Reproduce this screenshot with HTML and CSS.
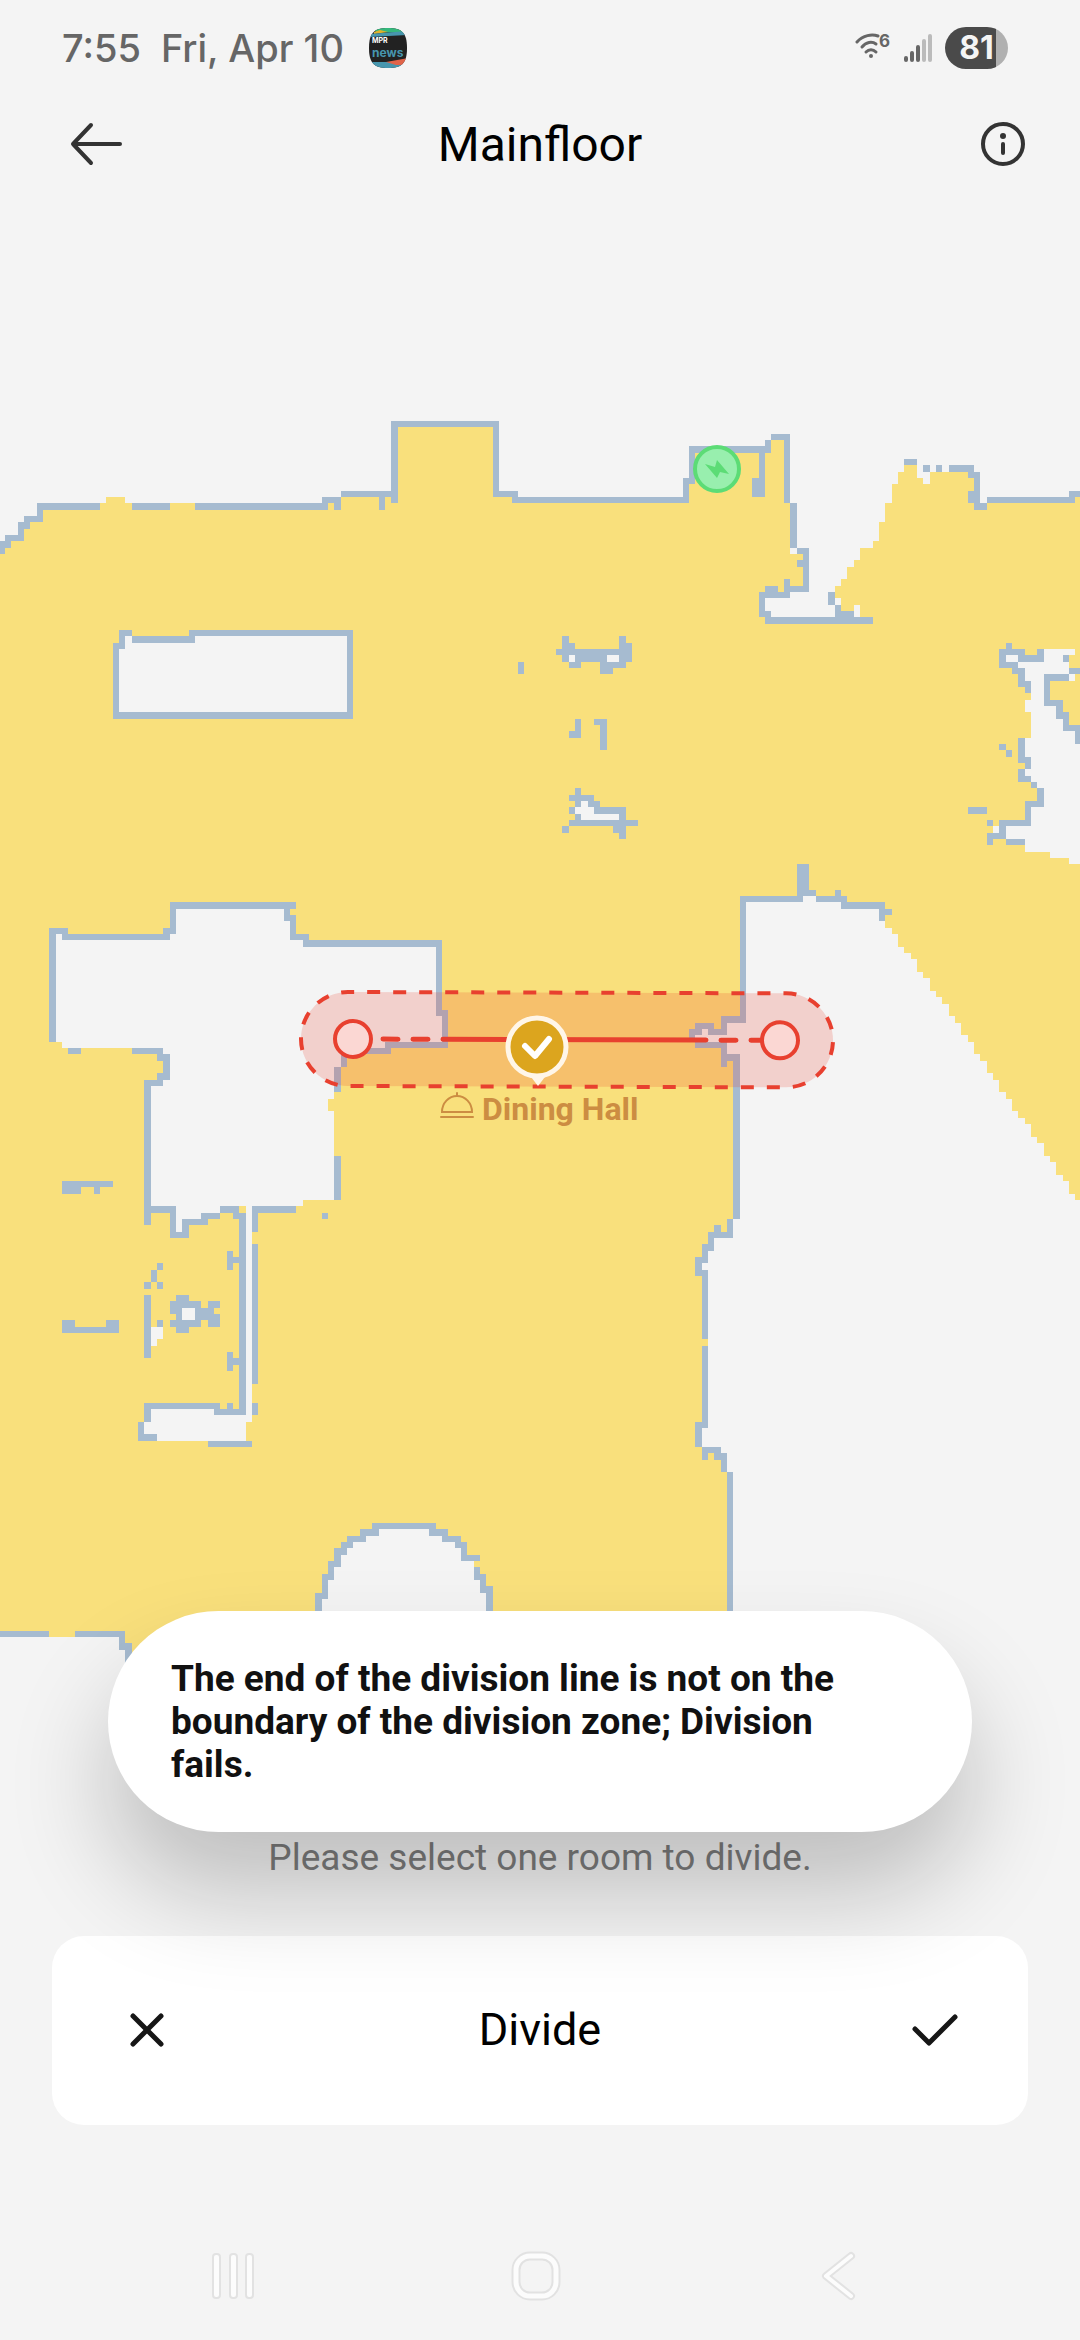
FILE: index.html
```html
<!DOCTYPE html>
<html lang="en">
<head>
    <meta charset="UTF-8">
    <meta name="viewport" content="width=device-width, initial-scale=1.0">
    <title>Mainfloor</title>
    <link rel="stylesheet" href="styles.css">
</head>
<body>
    <div class="status-bar">
        <span class="status-time">7:55</span>
        <span class="status-date">Fri, Apr 10</span>
        <svg class="status-app" width="40" height="40" viewBox="0 0 40 40" role="img" aria-label="MPR news">
            <defs>
                <clipPath id="appShape"><path d="M20 0C34 0 39 5 39 20S34 40 20 40 1 35 1 20 6 0 20 0z"/></clipPath>
            </defs>
            <g clip-path="url(#appShape)">
                <rect width="40" height="40" fill="#222"/>
                <path d="M5 0H40V5L8 4z" fill="#35b77c"/>
                <path d="M6 4L12 2L20 4L6 6z" fill="#e0b32c"/>
                <path d="M2 6L40 3V7L2 9z" fill="#4796ae"/>
                <path d="M2 34L20 34L40 37V40H2z" fill="#4796ae"/>
                <path d="M18 34L40 30V37H28z" fill="#e0644a"/>
            </g>
            <text x="4" y="15" class="app-name">MPR</text>
            <text x="4" y="29" class="app-news">news</text>
        </svg>
        <div class="status-icons">
            <svg width="36" height="36" viewBox="0 -3 36 36" fill="none" stroke="#666" stroke-width="3" stroke-linecap="round">
                <path d="M2 9C8 2 17 1 23 3"/>
                <path d="M7 14C11 9 17 8 21 11"/>
                <path d="M11 19C14 16 18 16 21 19"/>
                <circle cx="16" cy="23" r="2" fill="#666" stroke="none"/>
                <text x="24" y="14" class="wifi-six">6</text>
            </svg>
            <svg width="30" height="30" viewBox="0 0 30 30" stroke-width="4" stroke-linecap="round">
                <path d="M3 25V27M9 20V27M15 14V27" stroke="#666"/>
                <path d="M21 8V27M27 3V27" stroke="#bbb"/>
            </svg>
            <span class="battery">81</span>
        </div>
    </div>

    <header class="top-bar">
        <button type="button" class="icon-button" aria-label="Back">
            <svg width="52" height="44" viewBox="0 0 52 44" fill="none" stroke="#333" stroke-width="4" stroke-linecap="round" stroke-linejoin="round">
                <path d="M50 22H3M21 3L3 22L21 41"/>
            </svg>
        </button>
        <h1 class="title">Mainfloor</h1>
        <button type="button" class="icon-button" aria-label="Information">
            <svg width="46" height="46" viewBox="0 0 46 46" fill="none" stroke="#333" stroke-width="4" stroke-linecap="round">
                <circle cx="23" cy="23" r="20"/>
                <path d="M23 23V32"/>
                <circle cx="23" cy="15" r="3" fill="#333" stroke="none"/>
            </svg>
        </button>
    </header>

    <main class="stage">
        <svg class="map" viewBox="0 192 1080 1640" role="img" aria-label="Floor map">
            <!-- one unit = one map cell -->
            <g transform="translate(-1.333 421) scale(6.3333)" shape-rendering="crispEdges">
                <path class="floor" d="M0 20V19H1V18H3V16H4V15H6V13H17V12H20V13H51V12H54V11H62V0H79V11H82V12H108V9H109V4H121V3H122V2H125V13H126V20H125V21H127V27H125V28H121V31H136V29H135V30H133V28H132V26H133V25H134V23H135V22H136V20H138V19H139V16H140V13H141V10H142V8H143V6H145V9H146V10H147V8H154V13H156V12H169V11H172V197H21V194H20V192H0z"/>
                <!-- right side -->
                <path class="void" d="M165 36H170V37H169V40H170V41H169V40H165V45H167V47H168V49H170V51H172V70H169V69H166V68H162V66H159V63H163V61H165V58H164V57H163V56H162V55H163V53H162V50H163V46H162V44H163V41H162V39H161V38H165zM159 37h2v1h-2zM157 64h1v1h-1z"/>
                <path class="void" d="M118 76H127V75H129V76H133V77H139V79H140V80H141V81H142V83H143V84H144V85H145V87H146V88H147V90H148V91H149V92H150V94H151V95H152V97H153V98H154V100H155V101H156V103H157V104H158V106H159V107H160V109H161V110H162V111H163V113H164V114H165V116H166V117H167V119H168V120H169V122H170V123H172V198H116V166H115V163H114V162H111V159H112V134H111V133H112V131H113V129H116V126H117V101H115V98H110V97H115V94H118zM111 96h1v1h-1z"/>
                <!-- left side -->
                <path class="void" d="M9 81H10V82H27V81H28V77H45V79H46V82H48V83H69V94H70V98H61V99H55V100H54V102H53V107H52V109H53V123H48V124H40V158H39V161H23V158H24V156H34V157H39V124H35V125H32V126H29V128H28V124H24V105H26V104H27V100H26V99H10V98H9z"/>
                <path class="void" d="M20 34H21V35H31V34H55V46H19V36H20zM24 143h2v2h-1v1h-1zM29 140h2v2h-2z"/>
                <path class="void" d="M51 190V186H52V183H53V181H54V179H55V178H56V177H58V176H60V175H68V176H70V177H72V178H73V180H75V183H76V185H77V190z"/>
                <!-- furniture -->
                <path class="void" d="M90 37h1v1h-1zM96 37h2v1h-2zM92 60h1v1h1v1h4v1h-6v-1h-1v-1h1z"/>
                <g class="wall" transform="translate(.5 .5)">
                    <path d="M0 20V19H1V18H3V16H4V15H6V13H15M21 13H26M31 13H51V12H53V13M54 11H62M60 11V13M62 12V0H78V11H81V12H108V9H109V4H121V3M122 2H124V12M120 4V11M119 9V11M125 13V19"/>
                    <path d="M126 20H127V26H124M126 22h0M124 25V27H120V30H121V31H137M121 26H122M131 27V28M132 29V30H134"/>
                    <path d="M143 6H144M146 7h0M148 7h0M150 7H153V8H154V13H155M153 11V12M156 12H169V11H171"/>
                    <path d="M20 33H19V35H18V46H55V33H30V34H21M82 38V39"/>
                    <path d="M159 35V36M164 36V37H161V36H158V38H160V39H161V41H162V42M168 37h0M169 39H171M168 40H165V44H167V46H168V48H170V50"/>
                    <path d="M158 51h0M159 52h0M161 50V53H162V54M161 55V56H162M163 57h0M164 58V60H162V63H158V65H156V66M156 63h0M159 66H161M153 61H155"/>
                    <path d="M89 34V37M90 35h0M88 36H99M91 37H95V39H96V38H98M90 38H91M98 34V37M99 35V37M91 47V49H90M94 47H95V51"/>
                    <path d="M91 58V60M90 59H93V60H94V61H98V65M90 61h0M91 62V63M90 63H100M89 64h0M97 64h0"/>
                    <path d="M126 70V75H117V94H114V96H112V95H110V96H109V97M127 70V74H128M129 75H133V76H139V78M132 74h0M140 77h0M110 98H114V101M114 100H116V125"/>
                    <path d="M115 126V128H112V130H111V132H110V134H111V144M113 127V128M111 146V158H110V161M111 163V162H113V163H114V165M115 166V192"/>
                    <path d="M53 102V105M54 101V100M55 99H61V98H70V93H69V82H48V81H46V78H45V76H27V80H26V81H10V80H8V97M46 76h0"/>
                    <path d="M11 99H12M21 99H25V100H26V103H25V104H23V126M53 116V122M10 120H17M10 121H12M15 121h0"/>
                    <path d="M24 124H27V128H29V126H32V125H34M35 124H37V125H38V156H34V155H23V157M36 155h0M22 158V160H24M33 161H39M46 124H40V127M40 130V151M40 155V156M51 125h0"/>
                    <path d="M36 131V133M37 132h0M36 147V149M37 148h0M25 133h0M24 134V135M23 136h0M25 136h0M23 138V147M25 142h0"/>
                    <path d="M28 138H29M27 139H31M33 139H34M27 140H28M31 140H33M28 141h0M31 141H34M27 142H31M33 142H34M28 143H29M10 142V143H18V142M11 142h0M17 142h0"/>
                    <path d="M50 188V185H51V182H52V180H53V178H54V177H55V176H57V175H59V174H68V175H70V176H72V177H73V179H75M75 181V182H76V184H77V188M0 191H7M12 191H19V193H20V196"/>
                </g>
            </g>

            <!-- charging dock -->
            <circle cx="717" cy="469" r="22" fill="#98efae" stroke="#5cdc76" stroke-width="4"/>
            <path d="M705 464L715 467L717 460L729 474L720 472L717 478z" fill="#5cdc76"/>

            <!-- division line -->
            <g transform="rotate(.18 353 1039)" stroke="#e8402f">
                <rect x="301" y="992" width="532" height="94" rx="47" fill="#ea402c" fill-opacity=".2" stroke="none"/>
                <rect x="301" y="992" width="532" height="94" rx="47" fill="none" stroke-width="4" pathLength="1170" stroke-dasharray="13 13" stroke-dashoffset="7"/>
                <path d="M383 1039H398M413 1039H428M443 1039H706M721 1039H736M751 1039H762" stroke-width="5" stroke-linecap="round"/>
                <circle cx="353" cy="1039" r="18" fill="#fbd7d3" stroke-width="4"/>
                <circle cx="780" cy="1039" r="18" fill="#fbd7d3" stroke-width="4"/>
            </g>

            <!-- selected room -->
            <path d="M528 1073L538 1086L548 1073z" fill="#fff6e8"/>
            <circle cx="537" cy="1047" r="29" fill="#dca51e" stroke="#fff6e8" stroke-width="5"/>
            <path d="M525 1046L535 1056L549 1039" fill="none" stroke="#fff" stroke-width="6" stroke-linecap="round" stroke-linejoin="round"/>
            <g fill="none" stroke="#cc8d42" stroke-width="2" stroke-linecap="round">
                <path d="M442 1112A15 16 0 0 1 472 1112z"/>
                <path d="M457 1093V1096M441 1117H473"/>
            </g>
            <text class="room-name" x="482" y="1120">Dining Hall</text>
        </svg>

        <div class="toast" role="alert">The end of the division line is not on the boundary of the division zone; Division fails.</div>
    </main>

    <p class="hint">Please select one room to divide.</p>

    <section class="action-card">
        <button type="button" class="icon-button" aria-label="Cancel">
            <svg width="36" height="36" viewBox="0 0 36 36" fill="none" stroke="#161616" stroke-width="5" stroke-linecap="round">
                <path d="M4 4L32 32M32 4L4 32"/>
            </svg>
        </button>
        <h2 class="action-title">Divide</h2>
        <button type="button" class="icon-button" aria-label="Confirm">
            <svg width="46" height="36" viewBox="0 0 46 36" fill="none" stroke="#161616" stroke-width="5" stroke-linecap="round" stroke-linejoin="round">
                <path d="M3 17L17 31L43 5"/>
            </svg>
        </button>
    </section>

    <nav class="nav-bar">
        <button type="button" class="icon-button" aria-label="Recent apps">
            <svg width="50" height="52" viewBox="0 0 50 52" fill="#fcfcfc" stroke="#e2e2e2" stroke-width="2">
                <rect x="5" y="4" width="7" height="44" rx="3"/>
                <rect x="22" y="4" width="7" height="44" rx="3"/>
                <rect x="38" y="4" width="7" height="44" rx="3"/>
            </svg>
        </button>
        <button type="button" class="icon-button" aria-label="Home">
            <svg width="50" height="52" viewBox="0 0 50 52" fill="none">
                <rect x="5" y="6" width="40" height="40" rx="14" stroke="#e2e2e2" stroke-width="9"/>
                <rect x="5" y="6" width="40" height="40" rx="14" stroke="#fcfcfc" stroke-width="5"/>
            </svg>
        </button>
        <button type="button" class="icon-button" aria-label="Go back">
            <svg width="50" height="52" viewBox="0 0 50 52" fill="none" stroke-linecap="round" stroke-linejoin="round">
                <path d="M37 6L12 26L37 46" stroke="#e2e2e2" stroke-width="8"/>
                <path d="M37 6L12 26L37 46" stroke="#fcfcfc" stroke-width="4"/>
            </svg>
        </button>
    </nav>
</body>
</html>
```
FILE: styles.css
```css
* {
    margin: 0;
    padding: 0;
    box-sizing: border-box;
}

body {
    min-height: 100vh;
    display: flex;
    flex-direction: column;
    background-color: #f4f4f4;
    color: #000;
    font-family: Roboto, sans-serif;
}

svg {
    display: block;
}

.icon-button {
    display: flex;
    background: none;
    border: none;
    cursor: pointer;
}

.status-bar {
    display: flex;
    align-items: center;
    height: 96px;
    padding: 0 72px 0 62px;
    color: #666;
    font-family: Inter, sans-serif;
    font-size: 38px;
    font-weight: 500;
}

.status-date {
    margin-left: 20px;
}

.status-app {
    margin-left: 24px;
}

.app-name {
    fill: #fff;
    font-size: 7px;
    font-weight: 700;
}

.app-news {
    fill: #4796ae;
    font-size: 12px;
    font-weight: 700;
}

.status-icons {
    display: flex;
    align-items: center;
    gap: 12px;
    margin-left: auto;
}

.wifi-six {
    fill: #666;
    stroke: none;
    font-size: 17px;
    font-weight: 700;
}

.battery {
    width: 63px;
    height: 42px;
    border-radius: 21px;
    background: linear-gradient(to right, #4a4a4a 81%, #b0b0b0 81%);
    color: #f4f4f4;
    font-size: 32px;
    font-weight: 700;
    line-height: 42px;
    text-align: center;
}

.top-bar,
.action-card {
    display: grid;
    grid-template-columns: 1fr auto 1fr;
    align-items: center;
}

.top-bar .icon-button:last-child,
.action-card .icon-button:last-child {
    justify-self: end;
}

.top-bar {
    height: 96px;
    padding: 0 54px;
}

.top-bar .icon-button:first-child {
    padding-left: 16px;
}

.title {
    font-size: 48px;
    font-weight: 400;
}

.stage {
    position: relative;
    z-index: 1;
}

.map {
    width: 100%;
    height: auto;
}

.floor {
    fill: #f9e07c;
}

.void {
    fill: #f4f4f4;
}

.wall {
    fill: none;
    stroke: #a6bbd0;
    stroke-width: 1;
    stroke-linecap: square;
}

.room-name {
    fill: #cc8d42;
    font-size: 32px;
    font-weight: 700;
}

.toast {
    position: absolute;
    left: 10%;
    right: 10%;
    bottom: 0;
    padding: 46px 96px 46px 63px;
    border-radius: 111px;
    background: #fff;
    box-shadow: 0 60px 100px rgba(0, 0, 0, 0.22);
    color: #111;
    font-size: 37px;
    font-weight: 700;
    line-height: 43px;
}

.hint {
    color: #7c7c7c;
    font-size: 37px;
    line-height: 52px;
    text-align: center;
}

.action-card {
    margin: 52px 52px 0;
    padding: 68px 70px 69px;
    border-radius: 32px;
    background: #fff;
}

.action-card .icon-button:first-child {
    padding-left: 7px;
}

.action-title {
    font-size: 45px;
    font-weight: 400;
    line-height: 52px;
}

.nav-bar {
    display: flex;
    justify-content: space-between;
    margin-top: auto;
    padding: 40px 216px 38px 208px;
}
```
